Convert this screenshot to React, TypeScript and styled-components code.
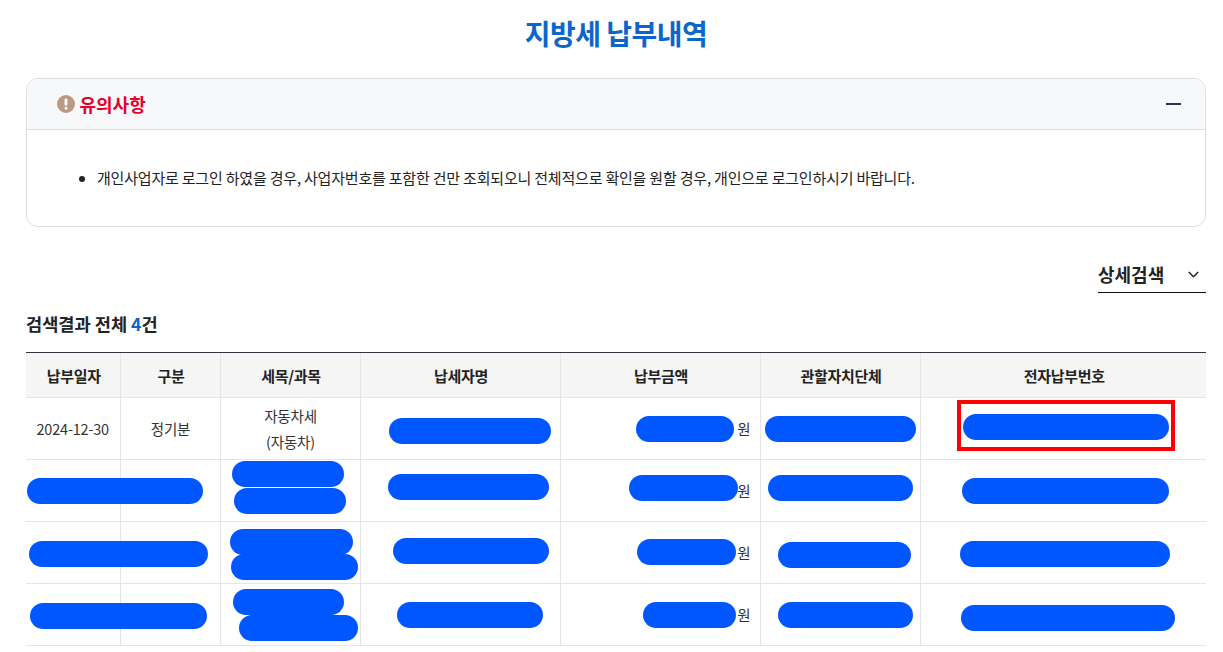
import * as React from "react";
import styled, { createGlobalStyle } from "styled-components";

const GlobalStyle = createGlobalStyle`
    html, body {
        margin: 0;
        padding: 0;
        background: #fff;
    }
    body {
        font-family: "Noto Sans CJK KR", "Noto Sans", sans-serif;
        color: #222;
    }
`;

const Page = styled.div`
    position: relative;
    width: 1223px;
    height: 652px;
    overflow: hidden;
    padding: 0 17px 0 26px;
    box-sizing: border-box;
`;

const Title = styled.h1`
    margin: 0;
    height: 78px;
    padding-bottom: 12px;
    box-sizing: border-box;
    display: flex;
    align-items: center;
    justify-content: center;
    font-size: 28px;
    font-weight: 700;
    letter-spacing: -0.5px;
    color: #0b66cc;
`;

const Notice = styled.section`
    border: 1px solid #dddddd;
    border-radius: 12px;
    overflow: hidden;
`;

const NoticeHead = styled.header`
    height: 50px;
    padding: 0 24px 0 30px;
    background: #f7f8fa;
    border-bottom: 1px solid #dddddd;
    display: flex;
    align-items: center;
    justify-content: space-between;
`;

const NoticeTitle = styled.h2`
    margin: 0;
    display: flex;
    align-items: center;
    gap: 4.5px;
    font-size: 18px;
    font-weight: 700;
    color: #e6002d;
`;

const NoticeBody = styled.ul`
    margin: 0;
    height: 96px;
    padding: 0 0 1px 70px;
    box-sizing: border-box;
    display: flex;
    align-items: center;
    font-size: 15px;
    letter-spacing: -0.2px;
    color: #222;
`;

const Bullet = styled.li`
    padding-left: 0;
`;

const FilterRow = styled.div`
    margin-top: 38px;
    display: flex;
    justify-content: flex-end;
`;

const FilterToggle = styled.div`
    width: 108px;
    height: 28px;
    padding: 0 7px 9px 0;
    box-sizing: border-box;
    border-bottom: 1px solid #111;
    display: flex;
    align-items: center;
    justify-content: space-between;
    font-size: 18px;
    font-weight: 700;
    color: #222;
`;

const ResultCount = styled.h3`
    margin: 19px 0 16px;
    height: 24px;
    line-height: 24px;
    font-size: 17.6px;
    font-weight: 700;
    color: #222;
`;

const Accent = styled.span`
    color: #0b66cc;
`;

const TableWrap = styled.div`
    border-top: 1px solid #333340;
`;

const Table = styled.table`
    width: 100%;
    table-layout: fixed;
    border-collapse: collapse;
    font-size: 14.5px;
`;

const HeadCell = styled.th`
    height: 44px;
    padding: 0 0 0 2px;
    background: #f5f5f5;
    border-bottom: 1px solid #e5e5e5;
    border-left: 1px solid #e5e5e5;
    font-size: 15px;
    letter-spacing: -0.3px;
    font-weight: 700;
    color: #222;
    &:first-child {
        border-left: 0;
    }
`;

const Cell = styled.td<{ $align?: string }>`
    height: 62px;
    padding: 0 9px 0 10px;
    box-sizing: border-box;
    border-bottom: 1px solid #e5e5e5;
    border-left: 1px solid #e5e5e5;
    text-align: ${props => props.$align || "center"};
    line-height: 26px;
    letter-spacing: -0.2px;
    color: #333;
    &:first-child {
        border-left: 0;
        padding: 0;
    }
`;

const Scribble = styled.div<{ $x: number; $y: number; $w: number }>`
    position: absolute;
    left: ${props => props.$x}px;
    top: ${props => props.$y}px;
    width: ${props => props.$w}px;
    height: 26px;
    border-radius: 13px;
    background: #0057ff;
`;

const Highlight = styled.div`
    position: absolute;
    left: 957px;
    top: 400px;
    width: 218px;
    height: 51px;
    box-sizing: border-box;
    border: 4px solid #ff0000;
`;

const columns = [
    { label: "납부일자", width: 94 },
    { label: "구분", width: 100 },
    { label: "세목/과목", width: 140 },
    { label: "납세자명", width: 200 },
    { label: "납부금액", width: 200 },
    { label: "관할자치단체", width: 160 },
    { label: "전자납부번호", width: 286 },
];

// 원본 캡처에 덧칠된 가림 표시 (페이지 좌표)
const scribbles = [
    [389, 418, 162], [636, 416, 98], [765, 416, 151], [963, 414, 206],
    [27, 478, 176], [232, 461, 112], [234, 488, 112], [388, 474, 161], [629, 475, 109], [768, 475, 145], [962, 478, 207],
    [29, 541, 179], [230, 529, 123], [231, 554, 127], [393, 538, 156], [637, 539, 99], [778, 542, 133], [960, 541, 210],
    [30, 603, 177], [233, 589, 111], [239, 615, 119], [397, 602, 146], [643, 602, 93], [778, 602, 135], [961, 605, 214],
];

const AlertIcon = () => (
    <svg width="18" height="18" viewBox="0 0 18 18">
        <circle cx="9" cy="9" r="9" fill="#bb9a84" />
        <rect x="7.6" y="3.4" width="2.8" height="7.4" rx="1.4" fill="#fff" />
        <circle cx="9" cy="13.3" r="1.5" fill="#fff" />
    </svg>
);

const MinusIcon = () => (
    <svg width="15" height="2" viewBox="0 0 15 2">
        <rect width="15" height="2" fill="#33334a" />
    </svg>
);

const ChevronIcon = () => (
    <svg width="11" height="7" viewBox="0 0 11 7" fill="none">
        <path d="M0.8 1 L5.5 5.7 L10.2 1" stroke="#222" strokeWidth="1.5" />
    </svg>
);

const App = () => (
    <Page>
        <GlobalStyle />
        <Title>지방세 납부내역</Title>
        <Notice>
            <NoticeHead>
                <NoticeTitle>
                    <AlertIcon />
                    유의사항
                </NoticeTitle>
                <MinusIcon />
            </NoticeHead>
            <NoticeBody>
                <Bullet>
                    개인사업자로 로그인 하였을 경우, 사업자번호를 포함한 건만 조회되오니 전체적으로 확인을 원할 경우, 개인으로 로그인하시기 바랍니다.
                </Bullet>
            </NoticeBody>
        </Notice>
        <FilterRow>
            <FilterToggle>
                상세검색
                <ChevronIcon />
            </FilterToggle>
        </FilterRow>
        <ResultCount>
            검색결과 전체 <Accent>4</Accent>건
        </ResultCount>
        <TableWrap>
            <Table>
                <colgroup>
                    {columns.map(col => (
                        <col key={col.label} width={col.width} />
                    ))}
                </colgroup>
                <thead>
                    <tr>
                        {columns.map(col => (
                            <HeadCell key={col.label}>{col.label}</HeadCell>
                        ))}
                    </tr>
                </thead>
                <tbody>
                    <tr>
                        <Cell>2024-12-30</Cell>
                        <Cell>정기분</Cell>
                        <Cell>
                            자동차세
                            <br />
                            (자동차)
                        </Cell>
                        <Cell />
                        <Cell $align="right">원</Cell>
                        <Cell />
                        <Cell />
                    </tr>
                    {[0, 1, 2].map(row => (
                        <tr key={row}>
                            <Cell />
                            <Cell />
                            <Cell />
                            <Cell />
                            <Cell $align="right">원</Cell>
                            <Cell />
                            <Cell />
                        </tr>
                    ))}
                </tbody>
            </Table>
        </TableWrap>
        {scribbles.map(([x, y, w]) => (
            <Scribble key={`${x}-${y}`} $x={x} $y={y} $w={w} />
        ))}
        <Highlight />
    </Page>
);

export default App;
